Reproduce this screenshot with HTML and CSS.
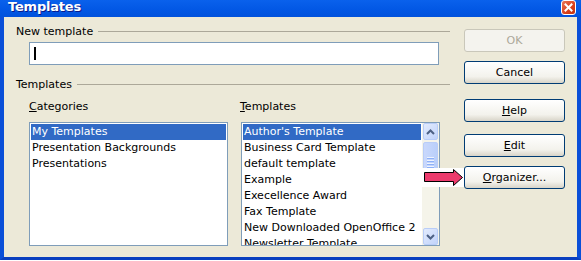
FILE: index.html
```html
<!DOCTYPE html>
<html lang="en">
<head>
    <meta charset="UTF-8">
    <title>Templates</title>
    <link rel="stylesheet" href="styles.css">
</head>
<body>
    <div class="window">
        <!-- Title bar -->
        <div class="titlebar">
            <span class="title">Templates</span>
            <span class="close-btn">
                <svg width="13" height="13" viewBox="0 0 13 13">
                    <path d="M3.5 3.5 L9.5 9.5 M9.5 3.5 L3.5 9.5" stroke="#fff" stroke-width="2" stroke-linecap="square"/>
                </svg>
            </span>
        </div>

        <div class="client">
            <div class="main">
                <div class="group-head">
                    <span>New template</span>
                    <span class="rule"></span>
                </div>
                <div class="name-field"><span class="caret"></span></div>

                <div class="group-head templates-head">
                    <span>Templates</span>
                    <span class="rule"></span>
                </div>

                <div class="columns">
                    <div class="column">
                        <div class="col-label"><u>C</u>ategories</div>
                        <div class="listbox">
                            <ul class="items">
                                <li class="selected">My Templates</li>
                                <li>Presentation Backgrounds</li>
                                <li>Presentations</li>
                            </ul>
                        </div>
                    </div>
                    <div class="column">
                        <div class="col-label"><u>T</u>emplates</div>
                        <div class="listbox">
                            <ul class="items">
                                <li class="selected">Author's Template</li>
                                <li>Business Card Template</li>
                                <li>default template</li>
                                <li>Example</li>
                                <li>Execellence Award</li>
                                <li>Fax Template</li>
                                <li>New Downloaded OpenOffice 2</li>
                                <li>Newsletter Template</li>
                            </ul>
                            <div class="scrollbar">
                                <div class="sb-btn">
                                    <svg width="9" height="6" viewBox="0 0 9 6"><path d="M1 5 L4.5 1.5 L8 5" fill="none" stroke="#4d6185" stroke-width="2"/></svg>
                                </div>
                                <div class="sb-track">
                                    <div class="sb-thumb">
                                        <span></span><span></span><span></span><span></span>
                                    </div>
                                </div>
                                <div class="sb-btn">
                                    <svg width="9" height="6" viewBox="0 0 9 6"><path d="M1 1 L4.5 4.5 L8 1" fill="none" stroke="#4d6185" stroke-width="2"/></svg>
                                </div>
                            </div>
                        </div>
                    </div>
                </div>
            </div>

            <div class="buttons">
                <button class="btn disabled">OK</button>
                <button class="btn">Cancel</button>
                <button class="btn gap-big"><u>H</u>elp</button>
                <button class="btn gap-mid"><u>E</u>dit</button>
                <button class="btn"><u>O</u>rganizer...</button>
            </div>
        </div>

        <!-- annotation arrow -->
        <svg class="pointer" width="42" height="19" viewBox="0 0 42 19">
            <rect x="0" y="0" width="42" height="19" fill="#fff"/>
            <path d="M2.5 4.5 H31.5 V1.5 L40.5 9.5 L31.5 17.5 V13.5 H2.5 Z" fill="#ec3a6c" stroke="#000" stroke-width="1"/>
        </svg>
    </div>
</body>
</html>
```

FILE: styles.css
```css
body {
    margin: 0;
    padding: 0;
    background: #fff;
    font-family: "DejaVu Sans", sans-serif;
    font-size: 11px;
    color: #000;
}

.window {
    position: relative;
    width: 581px;
    height: 260px;
    box-sizing: border-box;
    background: #0553df;
    border-left: 4px solid #0a4fd8;
    border-right: 4px solid #0a4fd8;
    border-bottom: 3px solid #0a3fbf;
    display: flex;
    flex-direction: column;
}

.titlebar {
    height: 17px;
    display: flex;
    justify-content: space-between;
    align-items: flex-start;
    background: linear-gradient(#0a61ec, #0257e4 60%, #0152dc);
    margin: 0 -4px;
    padding: 0 5px 0 8px;
}

.title {
    color: #fff;
    font-weight: bold;
    font-size: 13px;
    line-height: 14px;
    letter-spacing: -0.2px;
    text-shadow: 1px 1px #0a1a8a;
}

.close-btn {
    width: 13px;
    height: 13px;
    background: linear-gradient(135deg, #e8765a, #d8401c 60%, #c2320f);
    border: 1px solid #fff;
    border-radius: 3px;
    display: flex;
}

.client {
    flex: 1;
    background: #ece9d8;
    display: flex;
}

.main {
    width: 434px;
    padding: 8px 0 0 12px;
}

.group-head {
    display: flex;
    align-items: center;
    height: 13px;
    line-height: 13px;
}

.group-head .rule {
    flex: 1;
    height: 1px;
    margin-left: 5px;
    background: #aca899;
}

.templates-head {
    margin-top: 13px;
}

.name-field {
    width: 408px;
    height: 21px;
    margin: 4px 0 0 13px;
    background: #fff;
    border: 1px solid #7f9db9;
    display: flex;
    align-items: center;
}

.caret {
    width: 2px;
    height: 13px;
    margin-left: 4px;
    background: #000;
}

.columns {
    display: flex;
    gap: 12px;
    margin: 9px 0 0 13px;
}

.col-label {
    height: 13px;
    line-height: 13px;
    margin-bottom: 9px;
}

.column:last-child .listbox {
    margin-left: 1px;
}

.listbox {
    width: 197px;
    height: 122px;
    background: #fff;
    border: 1px solid #7f9db9;
    display: flex;
    overflow: hidden;
}

.items {
    list-style: none;
    margin: 0;
    padding: 1px;
    flex: 1;
}

.items li {
    height: 16px;
    line-height: 16px;
    padding-left: 1px;
    white-space: nowrap;
}

.items li.selected {
    background: #316ac5;
    color: #fff;
}

.scrollbar {
    width: 17px;
    display: flex;
    flex-direction: column;
    background: #f5f4ea;
}

.sb-btn {
    height: 15px;
    margin: 0 1px;
    border: 1px solid #b9cdf8;
    border-radius: 2px;
    background: linear-gradient(135deg, #e2ebfd, #c1d3fb);
    display: flex;
    align-items: center;
    justify-content: center;
}

.sb-track {
    flex: 1;
    padding-top: 2px;
}

.sb-thumb {
    height: 38px;
    margin: 0 1px;
    border: 1px solid #b9cdf8;
    border-radius: 2px;
    background: linear-gradient(90deg, #c9d8fc, #bacffa);
    display: flex;
    flex-direction: column;
    align-items: center;
    justify-content: center;
    gap: 1px;
}

.sb-thumb span {
    width: 7px;
    height: 1px;
    background: #eef3fe;
    border-bottom: 1px solid #8cb0f8;
}

.buttons {
    width: 101px;
    margin-left: 14px;
    padding-top: 12px;
    display: flex;
    flex-direction: column;
}

.btn {
    height: 23px;
    margin-bottom: 9px;
    padding: 0;
    font-family: "DejaVu Sans", sans-serif;
    font-size: 11px;
    color: #000;
    border: 1px solid #003c74;
    border-radius: 3px;
    background: linear-gradient(#ffffff, #f3f2ec 70%, #d8d4c8);
}

.btn.disabled {
    color: #aca899;
    border-color: #c9c7ba;
    background: #f4f3ee;
}

.btn.gap-big {
    margin-top: 6px;
    margin-bottom: 12px;
}

.btn.gap-mid {
    margin-bottom: 9px;
}

.pointer {
    position: absolute;
    left: 418px;
    top: 168px;
}
```
